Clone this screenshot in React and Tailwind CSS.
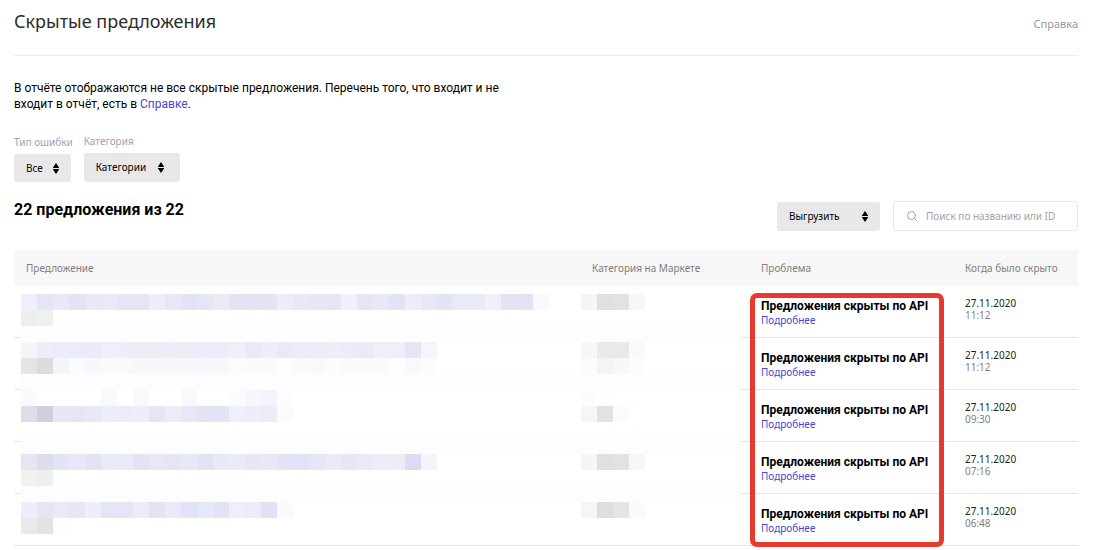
import { Search } from 'lucide-react'

const rows = [
  { id: 1, date: '27.11.2020', time: '11:12' },
  { id: 2, date: '27.11.2020', time: '11:12' },
  { id: 3, date: '27.11.2020', time: '09:30' },
  { id: 4, date: '27.11.2020', time: '07:16' },
  { id: 5, date: '27.11.2020', time: '06:48' },
]

// Mosaic over the private columns: 45 x 15 tiles, "name" starts at tile 0, "category" at tile 35
const mosaic = [
  {
    name: 'f0eefa e3e5f8 eae8f6 e2e4f6 e9e8f8 ebe9f7 e6e5f7 e7e5f5 eeeefa e9e6f6 e1e3f8 e6e5f4 ebebf7 e4e2f4 e3e4f5 e6e4f4 edecf8 eae8f6 e8e6f6 e7e5f5 f0f0fb e7e5f5 e9e8f7 e1e3f8 eeecf8 e8e7f5 e2e5f7 e7ebf8 eae9f7 f0effa e4e3f5 e3e1f4 f9f8fe',
    category: 'f5f5f2 e0e0dc e2e2e2 f5f7fa',
  },
  { name: 'ecf0ed f0f0ef' },
  { band: true },
  {
    name: 'f4f5fb edeef8 ecebf7 ecebf8 ebeaf6 efeefa eeedfa edecf7 efecf8 edeef9 eeedf7 ecebf7 edecf9 f0f0fb ebe9f8 eeeef9 ebe9f8 ecebf7 edecf8 f0edf8 ececf8 ebebf8 f0f0fb efeff9 e6e4f5 f5f6fc',
    category: 'f7f7f7 eaeae7 e9e9e9 f7f9fc',
  },
  {
    name: 'e5e5e7 dcdcde f4f5fb f8fbff f7f7fd fafafc fafafc f8f8fc f8f8fc f8f8fc f8f8fc f7f7fd f8f8fc fbfbfd fafafc fafafc fcfdff fafafc f8f8fd fcfcfe fafafc fafafc fafafc fcfdff f8f8fd fcfcff',
    category: 'fcfcfc f4f4f4 f8f8f8 fafdfb',
  },
  { band: true },
  {
    name: 'fafafc ffffff ffffff ffffff ffffff f9f8fe ffffff f9f8fe ffffff ffffff f9f8fe ffffff ffffff fcfcfe f6f6fc f2f3fd fcfdff',
    category: 'fcfcf9 fefefe',
  },
  {
    name: 'e0ddea d0cfe0 e7e6f6 e6e4f5 e4e8f7 ededfa ececf7 efedfa e6e4f5 ececf9 e8e7f7 e5e4f5 e2e4f7 f0f0fb eeeefa ececf8 fbfbfe',
    category: 'f6f6f6 e2e2e2 f8fbff',
  },
  {},
  { band: true },
  {
    name: 'e8e5f0 dddee9 e2e4f8 e8e6f7 e3e1f4 e7ebf8 eae9f7 e4e3f6 e8e7f7 e6e5f6 e5e8f5 e3e1f4 e5e9f8 e8ebf8 e7e5f6 eae8f7 e5e3f5 e1e4f6 e3e7f6 eceaf9 e7e5f6 ebe9f8 edecf8 ececf7 dbdbf3 f4f4fd',
    category: 'f5f5f2 e0e0dc e2e2e2 f5f7fa',
  },
  { name: 'f1f1ef ecf0ee' },
  { band: true },
  {
    name: 'eeeefa e6e4f5 ebe9f7 e8e6f6 eeeef9 e3e5f8 e6e4f6 ecebf6 e4e3f6 ebe9f7 e1e2f7 e4e8f7 e3e1f6 f1eefb ecebf8 e2e0f5 fafafc',
    category: 'f6f6f6 dedede e5e5e5 fafafa',
  },
  { name: 'e9e9e9 e4e3e1 fbfdff' },
]

function Tiles({ colors = '', className }) {
  return (
    <div className={`flex ${className}`}>
      {colors.split(' ').filter(Boolean).map((color, i) => (
        <span key={i} className="size-4 shrink-0" style={{ backgroundColor: `#${color}` }} />
      ))}
    </div>
  )
}

function Mosaic() {
  return (
    <div className="absolute top-11 left-[7px] w-[720px] bg-white" aria-hidden="true">
      {mosaic.map((line, i) => (
        <div key={i} className={`flex h-4 ${line.band ? 'bg-[#fdfdfd]' : ''}`}>
          <Tiles colors={line.name} className="w-[560px]" />
          <Tiles colors={line.category} className="w-40" />
        </div>
      ))}
    </div>
  )
}

function SortArrows() {
  return (
    <svg viewBox="0 0 6 11" className="h-[11px] w-1.5 fill-black" aria-hidden="true">
      <path d="M3 0 6 4.5V5H0v-.5zM3 11 0 6.5V6h6v.5z" />
    </svg>
  )
}

function Filter({ id, label, value, selectClass, arrowsClass }) {
  return (
    <div className="flex flex-col items-start gap-1">
      <label htmlFor={id} className="text-[10px] leading-4 whitespace-nowrap text-[#a3a3a3]">
        {label}
      </label>
      <div className="relative">
        <select
          id={id}
          className={`block appearance-none rounded-[3px] bg-[#e8e8e8] pl-3 text-[10px] text-black ${selectClass}`}
        >
          <option>{value}</option>
        </select>
        <span className={`pointer-events-none absolute inset-y-0 flex items-center ${arrowsClass}`}>
          <SortArrows />
        </span>
      </div>
    </div>
  )
}

export default function App() {
  return (
    <main className="bg-white pt-2 pr-4 pb-1 pl-3.5 font-['Noto_Sans',sans-serif] text-black">
      <header className="flex items-start justify-between border-b border-[#ededed] pb-5">
        <h1 className="text-lg leading-[27px] text-[#2b2b2b]">Скрытые предложения</h1>
        <a href="#help" className="pt-2 text-[11px] leading-4 text-[#999]">
          Справка
        </a>
      </header>

      <p className="mt-6 max-w-[490px] font-[Roboto,sans-serif] text-xs leading-4">
        В отчёте отображаются не все скрытые предложения. Перечень того, что входит и не входит в отчёт, есть в{' '}
        <a href="#help" className="text-[#4b45d1]">
          Справке
        </a>
        .
      </p>

      <div className="mt-[21px] flex items-end gap-[11px]">
        <Filter id="error-type" label="Тип ошибки" value="Все" selectClass="h-7 w-[57px]" arrowsClass="right-3" />
        <Filter id="category" label="Категория" value="Категории" selectClass="h-[29px] w-24" arrowsClass="right-4" />
      </div>

      <div className="mt-[19px] flex items-start justify-between">
        <h2 className="font-[Roboto,sans-serif] text-base leading-[18px] font-bold">22 предложения из 22</h2>
        <div className="flex items-center gap-[13px]">
          <button
            type="button"
            className="flex h-[29px] w-[103px] items-center justify-between rounded-[3px] bg-[#e8e8e8] px-3 text-[10px]"
          >
            Выгрузить
            <SortArrows />
          </button>
          <label className="flex h-[30px] w-[185px] items-center gap-2 rounded-[3px] border border-[#e6e6e6] px-3">
            <Search size={12} strokeWidth={2} className="shrink-0 text-[#a0a0a0]" aria-hidden="true" />
            <input
              type="text"
              aria-label="Поиск"
              placeholder="Поиск по названию или ID"
              className="w-full min-w-0 text-[10px] outline-none placeholder:text-[#a3a3a3]"
            />
          </label>
        </div>
      </div>

      <div className="relative mt-[19px]">
        <table className="w-full table-fixed border-separate border-spacing-0 text-left">
          <colgroup>
            <col />
            <col className="w-[169px]" />
            <col className="w-[204px]" />
            <col className="w-[125px]" />
          </colgroup>
          <thead>
            <tr className="h-9 bg-[#f7f7f7] text-[10px] text-[#808080]">
              <th className="pl-3 font-normal">Предложение</th>
              <th className="pl-3 font-normal">Категория на Маркете</th>
              <th className="pl-3 font-normal">Проблема</th>
              <th className="pl-3 font-normal">Когда было скрыто</th>
            </tr>
          </thead>
          <tbody>
            {rows.map((row) => (
              <tr key={row.id} className="h-[52px] align-top">
                <td className="border-b border-[#e6e6e6]" />
                <td className="border-b border-[#e6e6e6]" />
                <td className="border-b border-[#e6e6e6] pt-3 pl-3 whitespace-nowrap">
                  <p className="font-[Roboto,sans-serif] text-xs leading-4 font-bold">Предложения скрыты по API</p>
                  <a href="#details" className="block text-[10px] leading-3 text-[#4b45d1]">
                    Подробнее
                  </a>
                </td>
                <td className="border-b border-[#e6e6e6] pt-[11px] pl-3 text-[10px] leading-3">
                  <p className="text-[#222]">{row.date}</p>
                  <p className="text-[#808080]">{row.time}</p>
                </td>
              </tr>
            ))}
          </tbody>
        </table>
        <Mosaic />
        <div className="pointer-events-none absolute top-[43px] right-[134px] h-[254px] w-[194px] rounded-[7px] border-5 border-[#e63a30]" />
      </div>
    </main>
  )
}
